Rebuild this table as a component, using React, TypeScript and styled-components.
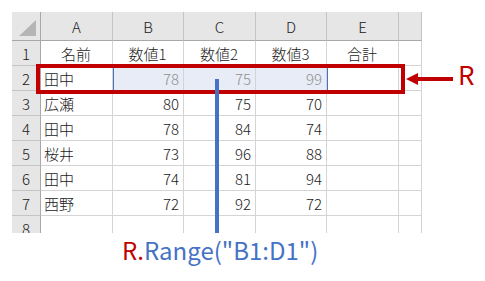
import * as React from 'react'
import styled, { createGlobalStyle } from 'styled-components'

const colors = {
  grid: '#d4d4d4',
  headerBg: '#e6e6e6',
  headerLine: '#c4c4c4',
  headerEdge: '#a8a8a8',
  text: '#1a1a1a',
  red: '#c00000',
  blue: '#4472c4',
  selBg: '#e8ecf6',
  selText: '#8f8f8f',
}

const GlobalStyle = createGlobalStyle`
  html, body {
    margin: 0;
    padding: 0;
    background: #ffffff;
  }
  body {
    font-family: "Noto Sans CJK JP", "Noto Sans", sans-serif;
  }
`

const Page = styled.div`
  width: 485px;
  height: 281px;
  overflow: hidden;
  padding: 12px 0 0 12px;
  box-sizing: border-box;
`

const Canvas = styled.div`
  position: relative;
  width: 410px;
`

const SheetClip = styled.div`
  height: 221px;
  overflow: hidden;
`

const Sheet = styled.div`
  display: grid;
  grid-template-columns: 29px 72px 71px 72px 71px 72px 23px;
  grid-template-rows: 29px repeat(8, 25px);
`

const Cell = styled.div<{ $align?: 'left' | 'right' | 'center'; $selected?: boolean }>`
  box-sizing: border-box;
  border-right: 1px solid ${colors.grid};
  border-bottom: 1px solid ${colors.grid};
  display: flex;
  align-items: center;
  justify-content: ${p => (p.$align === 'right' ? 'flex-end' : p.$align === 'center' ? 'center' : 'flex-start')};
  padding: 0 4px 0 3px;
  font-size: 15px;
  font-weight: 300;
  line-height: 1;
  color: ${p => (p.$selected ? colors.selText : colors.text)};
  background: ${p => (p.$selected ? colors.selBg : '#ffffff')};
  overflow: hidden;
  white-space: nowrap;
`

const ColHead = styled.div`
  box-sizing: border-box;
  background: ${colors.headerBg};
  border-right: 1px solid ${colors.headerLine};
  border-bottom: 1px solid ${colors.headerEdge};
  display: flex;
  align-items: center;
  justify-content: center;
  font-size: 15px;
  font-weight: 300;
  color: ${colors.text};
`

const RowHead = styled.div`
  box-sizing: border-box;
  background: ${colors.headerBg};
  border-right: 1px solid ${colors.headerEdge};
  border-bottom: 1px solid ${colors.headerLine};
  display: flex;
  align-items: center;
  justify-content: center;
  font-size: 15px;
  font-weight: 300;
  color: ${colors.text};
`

const Corner = styled(ColHead)`
  border-right: 1px solid ${colors.headerEdge};
  align-items: flex-end;
  justify-content: flex-end;
  padding: 0 4px 4px 0;
`

const SelectionFrame = styled.div`
  position: absolute;
  left: 101px;
  top: 54px;
  width: 215px;
  height: 25px;
  box-sizing: border-box;
  border: 1px solid ${colors.blue};
  pointer-events: none;
`

const RedFrame = styled.div`
  position: absolute;
  left: 24px;
  top: 52px;
  width: 369px;
  height: 30px;
  box-sizing: border-box;
  border: 4px solid ${colors.red};
`

const Pointer = styled.div`
  position: absolute;
  left: 203px;
  top: 67px;
  width: 4px;
  height: 154px;
  background: ${colors.blue};
`

const ArrowMark = styled.svg`
  position: absolute;
  left: 394px;
  top: 60px;
`

const SideLabel = styled.div`
  position: absolute;
  left: 446px;
  top: 49px;
  font-size: 26px;
  line-height: 1;
  color: ${colors.red};
`

const Caption = styled.div`
  margin: 3px 0 0 110px;
  font-size: 24px;
  line-height: 1.2;
  color: ${colors.blue};
  white-space: nowrap;
`

const Obj = styled.span`
  color: ${colors.red};
`

const columns = ['A', 'B', 'C', 'D', 'E', '']

const rows: Array<[string, number | string, number | string, number | string]> = [
  ['名前', '数値1', '数値2', '数値3'],
  ['田中', 78, 75, 99],
  ['広瀬', 80, 75, 70],
  ['田中', 78, 84, 74],
  ['桜井', 73, 96, 88],
  ['田中', 74, 81, 94],
  ['西野', 72, 92, 72],
]

const App = () => {
  return (
    <Page>
      <GlobalStyle />
      <Canvas>
        <SheetClip>
          <Sheet>
            <Corner>
              <svg width="17" height="16" viewBox="0 0 17 16">
                <polygon points="17,0 17,16 0,16" fill="#b5b5b5" />
              </svg>
            </Corner>
            {columns.map((c, i) => (
              <ColHead key={i}>{c}</ColHead>
            ))}
            {rows.map((r, ri) => {
              const isHeader = ri === 0
              const selected = ri === 1
              return (
                <React.Fragment key={ri}>
                  <RowHead>{ri + 1}</RowHead>
                  <Cell $align={isHeader ? 'center' : 'left'}>{r[0]}</Cell>
                  {r.slice(1).map((v, ci) => (
                    <Cell key={ci} $align={isHeader ? 'center' : 'right'} $selected={selected}>
                      {v}
                    </Cell>
                  ))}
                  <Cell $align="center">{isHeader ? '合計' : ''}</Cell>
                  <Cell />
                </React.Fragment>
              )
            })}
            <RowHead>8</RowHead>
            <Cell />
            <Cell />
            <Cell />
            <Cell />
            <Cell />
            <Cell />
          </Sheet>
        </SheetClip>

        <SelectionFrame />
        <RedFrame />
        <Pointer />
        <ArrowMark width="47" height="14" viewBox="0 0 47 14">
          <polygon points="0,7 12,1 12,13" fill={colors.red} />
          <rect x="10" y="5" width="37" height="4" fill={colors.red} />
        </ArrowMark>
        <SideLabel>R</SideLabel>
      </Canvas>
      <Caption>
        <Obj>R.</Obj>Range("B1:D1")
      </Caption>
    </Page>
  )
}

export default App
